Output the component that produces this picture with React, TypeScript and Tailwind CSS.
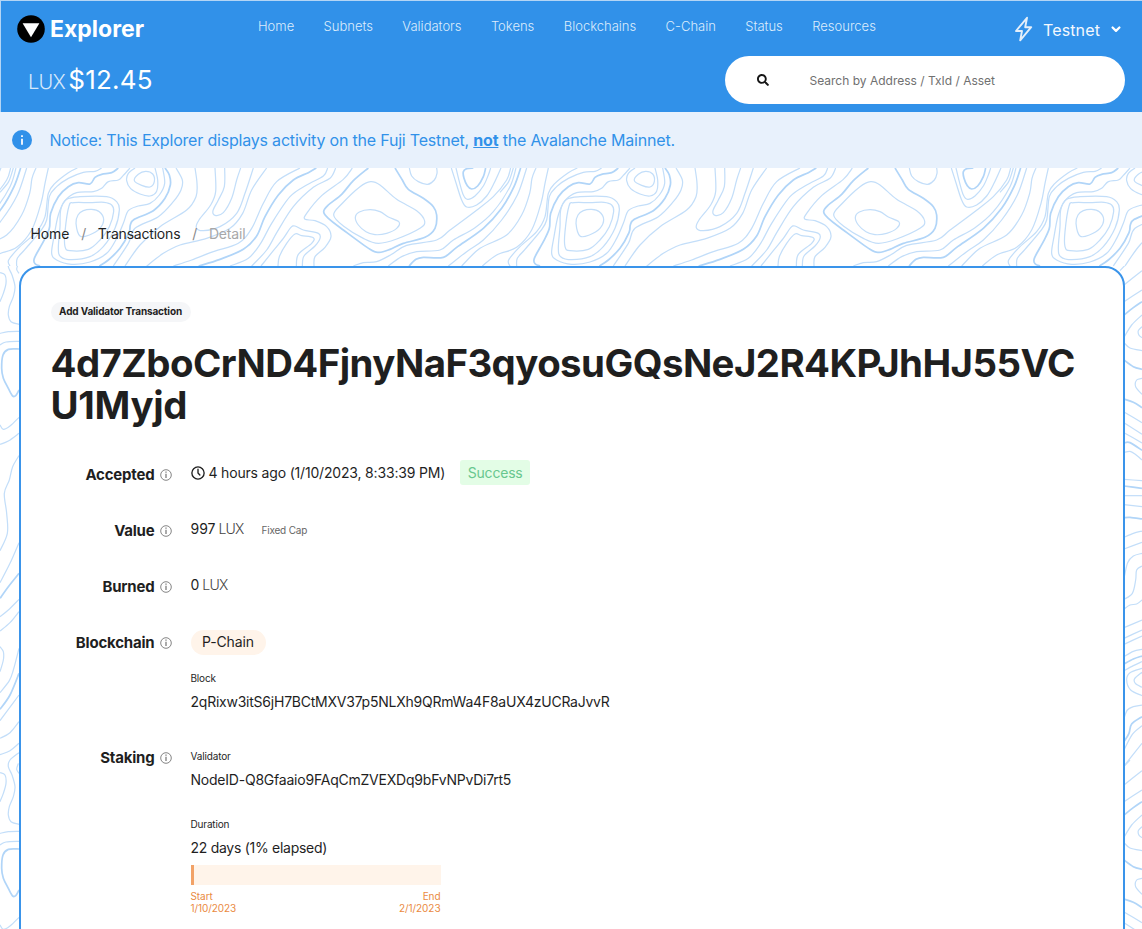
import type { ReactNode } from "react";
import { FaSearch } from "react-icons/fa";

type Line = { p: number[]; thick?: boolean; closed?: boolean };

/** Smooth path through a flat list of x, y coordinates. */
function smooth({ p, closed }: Line) {
  const n = p.length / 2;
  const at = (i: number) => {
    const k = closed ? (i + n) % n : Math.max(0, Math.min(n - 1, i));
    return [p[2 * k], p[2 * k + 1]];
  };
  let d = `M${p[0]} ${p[1]}`;
  for (let i = 0; i < (closed ? n : n - 1); i++) {
    const [a, b, c, e] = [at(i - 1), at(i), at(i + 1), at(i + 2)];
    d += `C${b[0] + (c[0] - a[0]) / 6} ${b[1] + (c[1] - a[1]) / 6} ${c[0] - (e[0] - b[0]) / 6} ${c[1] - (e[1] - b[1]) / 6} ${c[0]} ${c[1]}`;
  }
  return d + (closed ? "Z" : "");
}

function Contours({ lines }: { lines: Line[] }) {
  return (
    <>
      {lines.map((l, i) => (
        <path key={i} d={smooth(l)} stroke={l.thick ? "#b1d5f8" : "#c3def9"} strokeWidth={l.thick ? 5.2 : 3.7} />
      ))}
    </>
  );
}

/* Contour drawing units are thirds of a pixel; the pattern repeats every 1500 units. */
const leftHills: Line[] = [
  { p: [0, 97, 26, 65, 40, 24] },
  { p: [30, 318, 26, 300, 60, 260, 110, 215, 135, 170, 145, 100, 165, 70, 205, 38, 232, 24] },
  { p: [50, 318, 52, 295, 75, 268, 120, 215, 140, 180, 148, 110, 170, 80, 205, 55, 250, 37, 285, 34, 305, 24] },
  { p: [120, 318, 106, 312, 103, 295, 130, 245, 148, 205, 152, 160, 175, 110, 205, 80, 235, 68, 270, 72, 285, 52, 305, 43, 335, 38, 355, 24], thick: true },
  { p: [390, 24, 370, 46, 355, 60, 325, 65, 305, 85, 280, 95, 230, 98, 195, 122, 175, 165, 162, 230, 155, 280, 170, 300, 215, 313, 270, 306, 320, 280, 350, 235, 370, 190, 385, 152, 415, 138, 450, 130, 478, 105, 494, 70, 488, 24] },
  { p: [182, 150, 200, 118, 240, 110, 320, 110, 350, 125, 358, 150, 345, 205, 310, 260, 270, 290, 215, 299, 182, 290, 175, 265, 180, 200], closed: true },
  { p: [207, 138, 222, 128, 270, 128, 312, 127, 335, 135, 341, 155, 328, 200, 300, 240, 265, 268, 210, 272, 195, 260, 195, 215], closed: true },
  { p: [228, 190, 234, 165, 250, 152, 275, 148, 298, 155, 311, 178, 300, 205, 268, 225, 240, 228], closed: true },
  { p: [403, 62, 415, 43, 437, 34, 458, 42, 463, 65, 450, 81, 425, 76], closed: true },
  { p: [405, 24, 385, 40, 380, 62, 392, 86, 420, 102, 450, 108, 470, 94, 473, 60, 465, 24] },
  { p: [495, 24, 508, 45, 511, 75, 495, 115, 460, 152, 403, 178, 391, 195, 387, 218, 360, 265, 325, 300, 298, 318], thick: true },
  { p: [528, 24, 547, 60, 543, 90, 520, 125, 475, 170, 405, 205, 385, 250, 340, 318] },
  { p: [585, 24, 591, 70, 588, 110, 560, 150, 480, 200, 420, 255, 375, 318] },
  { p: [645, 24, 647, 95, 632, 135, 597, 180, 589, 203, 610, 212, 660, 200, 710, 160, 735, 100, 760, 24] },
  { p: [674, 24, 673, 80, 655, 120, 639, 152, 645, 166, 670, 158, 695, 115, 710, 60, 722, 24] },
  { p: [440, 318, 490, 280, 540, 255, 620, 235, 690, 205, 728, 160, 755, 90, 800, 24] },
  { p: [520, 318, 575, 300, 640, 275, 715, 250, 755, 205, 790, 130, 830, 65, 900, 24] },
  { p: [596, 318, 660, 298, 730, 268, 770, 228, 795, 170, 835, 105, 880, 60, 925, 38, 949, 24], thick: true },
  { p: [690, 318, 745, 295, 782, 250, 815, 190, 870, 110, 920, 75, 970, 48, 983, 24] },
  { p: [755, 318, 800, 270, 832, 215, 880, 140, 940, 82, 990, 55, 1007, 24] },
  { p: [783, 318, 820, 272, 850, 235, 872, 203, 885, 198, 910, 210, 955, 220, 960, 235, 945, 258, 912, 288, 907, 318] },
  { p: [834, 318, 838, 290, 860, 250, 885, 222, 905, 227, 940, 233, 935, 250, 895, 283, 889, 318] },
  { p: [1057, 24, 1030, 58, 965, 107, 920, 160, 915, 178, 945, 182, 980, 200, 993, 230, 975, 262, 945, 290, 942, 318] },
];
const rightHills: Line[] = [
  { p: [265, 24, 220, 62, 185, 103, 145, 135, 131, 155, 145, 175, 190, 210, 270, 268, 298, 277, 330, 268, 370, 250, 435, 232, 465, 205, 470, 165, 460, 140, 430, 115, 385, 88, 367, 60, 345, 24], thick: true },
  { p: [161, 165, 185, 132, 240, 80, 272, 65, 300, 75, 350, 118, 410, 152, 434, 183, 420, 205, 350, 237, 295, 250, 250, 235, 190, 198], closed: true },
  { p: [226, 172, 238, 156, 270, 149, 300, 155, 325, 171, 357, 186, 350, 205, 320, 220, 285, 224, 258, 215, 235, 195], closed: true },
  { p: [388, 24, 395, 48, 415, 65, 443, 73, 463, 60, 471, 40, 470, 24] },
  { p: [580, 24, 560, 26, 550, 35, 552, 55, 562, 77, 575, 87, 593, 78, 610, 50, 617, 24], thick: true },
  { p: [528, 24, 538, 65, 550, 105, 563, 118, 585, 108, 610, 78, 625, 45, 632, 24] },
  { p: [514, 24, 530, 75, 545, 120, 560, 141, 590, 135, 620, 108, 642, 70, 663, 24] },
  { p: [220, 318, 250, 308, 290, 305, 335, 283, 380, 256, 470, 240, 510, 210, 580, 158, 640, 110, 680, 60, 692, 24] },
  { p: [325, 318, 365, 290, 410, 275, 480, 270, 520, 240, 585, 203, 640, 155, 690, 80, 708, 24] },
  { p: [387, 318, 408, 298, 430, 292, 490, 292, 530, 262, 610, 205, 665, 145, 702, 80, 722, 24], thick: true },
  { p: [505, 318, 560, 275, 610, 240, 665, 180, 712, 105, 740, 24] },
  { p: [545, 318, 600, 265, 680, 225, 725, 165, 749, 100, 756, 55, 768, 24] },
  { p: [607, 318, 650, 285, 710, 262, 755, 210, 783, 130, 795, 70, 805, 24] },
].map((l) => ({ ...l, p: l.p.map((v, i) => (i % 2 ? v : v + 840)) }));

const leftEdge: Line[] = [
  { p: [57, -22, 30, 0, 25, 20, 36, 45, 45, 80, 40, 110, 28, 140, 25, 165, 33, 185, 57, 193] },
  { p: [55, 10, 50, 28, 57, 40] },
  { p: [0, 38, 15, 45, 18, 70, 10, 100, 0, 125] },
  { p: [0, 220, 25, 215, 57, 214] },
  { p: [0, 255, 18, 246, 57, 244] },
  { p: [57, 267, 25, 268, 9, 285, 5, 325, 10, 355, 25, 385, 38, 408, 48, 406, 57, 390], thick: true },
  { p: [0, 495, 10, 508, 30, 498, 57, 472] },
  { p: [0, 553, 25, 543, 57, 520] },
  { p: [57, 587, 38, 620, 28, 660, 13, 700, 20, 760, 22, 820, 0, 872] },
  { p: [57, 848, 30, 910, 0, 968] },
  { p: [57, 940, 25, 980, 0, 1015], thick: true },
  { p: [57, 1018, 25, 1050, 0, 1070] },
  { p: [57, 1055, 30, 1088, 0, 1113] },
  { p: [0, 1160, 10, 1175, 10, 1200, 0, 1235] },
  { p: [57, 1165, 40, 1230, 28, 1262, 0, 1298] },
  { p: [57, 1240, 30, 1305, 0, 1348], thick: true },
  { p: [57, 1305, 25, 1348, 0, 1382] },
  { p: [57, 1385, 30, 1418, 0, 1435] },
  { p: [57, 1450, 30, 1472, 0, 1484] },
];
const rightEdge: Line[] = [
  { p: [60, 32, 90, 0] },
  { p: [72, 75, 126, 32] },
  { p: [72, 125, 126, 90] },
  { p: [72, 165, 100, 143, 126, 125], thick: true },
  { p: [72, 232, 95, 195, 126, 165] },
  { p: [72, 248, 90, 264, 126, 272] },
  { p: [126, 200, 115, 212, 117, 226, 126, 233] },
  { p: [72, 300, 100, 320, 126, 328], thick: true },
  { p: [126, 355, 110, 360, 107, 380, 126, 403] },
  { p: [72, 417, 100, 427, 126, 443], thick: true },
  { p: [72, 456, 126, 488] },
  { p: [72, 488, 126, 523] },
  { p: [72, 518, 126, 549] },
  { p: [72, 549, 90, 548, 126, 571], thick: true },
  { p: [72, 577, 90, 574, 105, 582, 126, 600] },
  { p: [72, 658, 126, 662] },
  { p: [72, 678, 126, 685], thick: true },
  { p: [72, 707, 126, 707] },
  { p: [72, 734, 126, 740] },
  { p: [72, 773, 90, 772, 126, 777], thick: true },
  { p: [72, 832, 100, 820, 126, 813] },
  { p: [72, 867, 126, 847] },
  { p: [73, 950, 83, 908, 100, 888, 126, 880] },
  { p: [72, 1018, 97, 1000, 107, 960, 110, 930, 126, 918] },
  { p: [72, 1047, 90, 1035, 110, 1032, 126, 1020] },
  { p: [72, 1103, 126, 1080] },
  { p: [72, 1135, 126, 1110] },
  { p: [72, 1153, 126, 1128] },
  { p: [72, 1190, 100, 1174, 126, 1168] },
  { p: [72, 1212, 100, 1197, 126, 1188], thick: true },
  { p: [72, 1232, 100, 1217, 126, 1205] },
  { p: [126, 1225, 90, 1238, 80, 1260, 92, 1290, 126, 1307] },
  { p: [126, 1237, 104, 1256, 106, 1270, 126, 1282] },
  { p: [72, 1375, 82, 1350, 100, 1340, 126, 1335] },
  { p: [72, 1445, 87, 1420, 95, 1392, 126, 1370], thick: true },
  { p: [72, 1470, 97, 1423, 126, 1397] },
  { p: [72, 1518, 126, 1450] },
];

function Topography() {
  return (
    <div className="absolute inset-0 overflow-hidden" aria-hidden="true">
      <svg className="absolute left-0 top-[168px] h-[100px] w-full" viewBox="0 24 3426 300" fill="none" preserveAspectRatio="xMinYMin slice">
        {[-1500, 0, 1500, 3000].map((x) => (
          <g key={x} transform={`translate(${x} 0)`}>
            <Contours lines={leftHills} />
            <Contours lines={rightHills} />
          </g>
        ))}
      </svg>
      <svg className="absolute left-0 top-[266px] h-[663px] w-[24px]" viewBox="0 18 72 1989" fill="none">
        <Contours lines={leftEdge} />
        <g transform="translate(0 1500)">
          <Contours lines={leftEdge} />
        </g>
      </svg>
      <svg className="absolute right-0 top-[266px] h-[663px] w-[42px]" viewBox="0 18 126 1989" fill="none">
        <Contours lines={rightEdge} />
        <g transform="translate(0 1500)">
          <Contours lines={rightEdge} />
        </g>
      </svg>
    </div>
  );
}

const nav = ["Home", "Subnets", "Validators", "Tokens", "Blockchains", "C-Chain", "Status", "Resources"];

function Header() {
  return (
    <header className="flex h-28 flex-col border-l border-t border-[#b4d5f5] bg-[#3191e9] text-white">
      <div className="flex h-[55px] items-start">
        <div className="flex w-[257px] items-center pl-[16px] pt-[14px]">
          <svg className="size-7" viewBox="0 0 28 28">
            <circle cx="14" cy="14" r="13.8" fill="#000" />
            <path d="M5.6 8.2h16.8L14 22.2z" fill="#fff" />
          </svg>
          <span className="ml-[5px] text-[23px] font-bold leading-7">Explorer</span>
        </div>
        <nav className="flex gap-[29.4px] pt-[15px] text-[13px] font-light leading-5 text-[#dcecfc]">
          {nav.map((item) => (
            <a key={item}>{item}</a>
          ))}
        </nav>
        <div className="ml-auto flex items-center pr-[21px] pt-[14px]">
          <svg className="h-[28px] w-[20px]" viewBox="0 0 20 28" fill="none" stroke="#e4effa" strokeWidth="1.9" strokeLinejoin="round">
            <path d="M13 2.8 2 16h6L6.2 25.4 17.2 12.2h-6z" />
          </svg>
          <span className="ml-[9px] pt-[2px] text-base leading-6 tracking-[0.13px] text-[#f3f8fe]">Testnet</span>
          <svg className="ml-[11px] mt-[1px] h-[7px] w-[10px]" viewBox="0 0 10 7" fill="none" stroke="#fff" strokeWidth="2.2" strokeLinecap="round" strokeLinejoin="round">
            <path d="M1.6 1.5 5 4.9 8.4 1.5" />
          </svg>
        </div>
      </div>
      <div className="flex h-12 items-center justify-between pl-[27px] pr-[17.5px]">
        <div className="flex items-baseline pt-[2px] leading-8">
          <span className="text-[20px] font-light tracking-[-0.8px] text-[#d5e8fb]">LUX</span>
          <span className="ml-[3.5px] text-[26px] tracking-[0.2px]">$12.45</span>
        </div>
        <div className="flex h-12 w-[400px] items-center rounded-full bg-white">
          <FaSearch className="ml-8 size-[12px] text-[#161616]" />
          <span className="ml-[41px] pt-px text-xs text-[#707070]">Search by Address / TxId / Asset</span>
        </div>
      </div>
    </header>
  );
}

function InfoMark() {
  return (
    <svg className="ml-[5px] size-[12px]" viewBox="0 0 12 12" fill="none" stroke="#666" strokeWidth="0.8">
      <circle cx="6" cy="6" r="5.3" />
      <path d="M6 4.7v4.4M6 2.6v1.2" strokeWidth="1.1" />
    </svg>
  );
}

function Row({ label, className, children }: { label: string; className: string; children: ReactNode }) {
  return (
    <div className={`flex ${className}`}>
      <div className="flex h-[26px] w-[151px] items-center justify-end text-[15px] font-bold tracking-[-0.2px]">
        <span className="pt-px leading-6">{label}</span>
        <InfoMark />
      </div>
      <div className="ml-[19px] text-sm leading-[22px]">{children}</div>
    </div>
  );
}

export default function App() {
  return (
    <div className="relative h-[929px] w-full overflow-hidden bg-white font-[Inter,sans-serif] text-[#1f1f1f]">
      <Topography />
      <div className="relative">
        <Header />
        <div className="flex h-14 items-center bg-[#e8f1fc] pl-[11.5px] text-base text-[#3191e9]">
          <svg className="size-5" viewBox="0 0 20 20">
            <circle cx="10" cy="10" r="10" fill="#3191e9" />
            <path d="M10 5.2v1.9M10 8.8v6" stroke="#e8f1fc" strokeWidth="2" />
          </svg>
          <p className="ml-[18px] whitespace-pre pb-px tracking-[-0.195px]">
            Notice: This Explorer displays activity on the Fuji Testnet, <b className="underline">not</b> the Avalanche Mainnet.
          </p>
        </div>
        <div className="flex h-[98px] items-start pl-[30.5px] pt-[56px] text-sm">
          <span className="tracking-[-0.12px]">Home</span>
          <span className="ml-[12px] text-[#888]">/</span>
          <span className="ml-[11.5px] tracking-[-0.2px]">Transactions</span>
          <span className="ml-[12px] text-[#888]">/</span>
          <span className="ml-[11.5px] tracking-[-0.15px] text-[#a8a8a8]">Detail</span>
        </div>
        <main className="ml-[18.5px] mr-[17.5px] h-[700px] rounded-t-[20px] border-2 border-[#3a94ea] bg-white">
          <div className="ml-[30px] mt-[34px] flex h-5 w-[140px] items-center justify-center rounded-full bg-[#f5f6f8] text-[10px] font-bold tracking-[-0.15px]">
            <span className="-mt-px">Add Validator Transaction</span>
          </div>
          <h1 className="ml-[30px] mt-[19.5px] w-[1036px] break-all text-[38.4px] font-bold leading-[42px] tracking-[-0.55px]">
            4d7ZboCrND4FjnyNaF3qyosuGQsNeJ2R4KPJhHJ55VC<span className="tracking-[-0.3px]">U1Myjd</span>
          </h1>

          <Row label="Accepted" className="mt-[36px] h-14">
            <div className="flex h-[22px] items-center">
              <svg className="size-[14px]" viewBox="0 0 24 24" fill="none" stroke="#1f1f1f" strokeWidth="2.3" strokeLinecap="round" strokeLinejoin="round">
                <circle cx="12" cy="12" r="10.5" />
                <path d="M12 5.5V12l3.2 3.4" />
              </svg>
              <span className="ml-[4px] tracking-[-0.18px]">4 hours ago (1/10/2023, 8:33:39 PM)</span>
              <span className="ml-[15px] flex h-[25px] w-[70px] items-center justify-center rounded-[3px] bg-[#e3fde6] tracking-[-0.2px] text-[#68c78e]">
                Success
              </span>
            </div>
          </Row>
          <Row label="Value" className="h-14">
            997 <span className="-ml-[1px] font-light tracking-[-0.8px] text-[#444]">LUX</span>
            <span className="ml-[18px] text-[10px] tracking-[-0.2px] text-[#666]">Fixed Cap</span>
          </Row>
          <Row label="Burned" className="h-14">
            0 <span className="-ml-[1px] font-light tracking-[-0.7px] text-[#444]">LUX</span>
          </Row>
          <Row label="Blockchain" className="h-[115px]">
            <div className="flex h-[25px] w-[75px] items-center justify-center rounded-full bg-[#fff4ea] tracking-[-0.1px]">P-Chain</div>
            <div className="mt-[12.5px] text-[10px] leading-[22px] tracking-[-0.17px]">Block</div>
            <div className="mt-[2px] tracking-[-0.235px]">2qRixw3itS6jH7BCtMXV37p5NLXh9QRmWa4F8aUX4zUCRaJvvR</div>
          </Row>
          <Row label="Staking" className="">
            <div className="text-[10px] leading-[22px] tracking-[-0.15px]">Validator</div>
            <div className="mt-[2px] tracking-[-0.22px]">NodeID-Q8Gfaaio9FAqCmZVEXDq9bFvNPvDi7rt5</div>
            <div className="mt-[22px] text-[10px] leading-[22px] tracking-[-0.17px]">Duration</div>
            <div className="mt-[2px] tracking-[-0.28px]">22 days (1% elapsed)</div>
            <div className="mt-[6px] h-5 w-[250px] bg-[#fff4ea]">
              <div className="h-full w-[3px] bg-[#f2a267]" />
            </div>
            <div className="mt-[5px] flex w-[250px] justify-between text-[10px] leading-[12.5px] tracking-[-0.07px] text-[#ea8a42]">
              <div>
                Start
                <br />
                1/10/2023
              </div>
              <div className="text-right">
                End
                <br />
                2/1/2023
              </div>
            </div>
          </Row>
        </main>
      </div>
    </div>
  );
}
